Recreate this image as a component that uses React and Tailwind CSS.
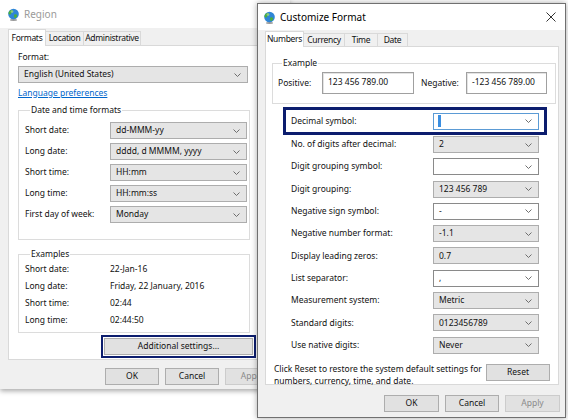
import React from 'react';

const Chevron = () => (
  <svg width="7" height="4" viewBox="0 0 7 4" className="shrink-0">
    <polyline points="0.5,0.5 3.5,3.5 6.5,0.5" fill="none" stroke="#606060" strokeWidth="0.9" />
  </svg>
);

const Globe = () => (
  <svg width="13" height="13" viewBox="0 0 13 13" className="shrink-0">
    <ellipse cx="6.5" cy="12" rx="3.5" ry="0.9" fill="#9a9a9a" />
    <circle cx="6.5" cy="6" r="5.3" fill="#2f86d6" />
    <path d="M3 2.6c1.3-.9 2.6-.6 3.2.4.5.9-.4 1.5-1.2 1.6-.9.2-.6 1.6-1.6 1.9-.9.2-1.7-.3-2-1.3.2-1 .7-1.9 1.6-2.6z" fill="#4caf3a" />
    <path d="M7.6 6.3c.9-.4 2 0 2.4.8.4.9-.3 2.1-1.2 2.7-.8.5-1.6.1-1.6-.8 0-.9-.6-1.9.4-2.7z" fill="#4caf3a" />
    <circle cx="5" cy="3.6" r="1.4" fill="#ffffff" opacity="0.35" />
  </svg>
);

function Combo({ value, white, className = '' }) {
  return (
    <div
      className={`flex h-[17px] shrink-0 items-center justify-between border pl-[5px] pr-[6px] ${
        white ? 'border-[#8a8a8a] bg-white' : 'border-[#adadad] bg-[#e5e5e5]'
      } ${className}`}
    >
      <span className="leading-none">{value}</span>
      <Chevron />
    </div>
  );
}

function Button({ children, className = '' }) {
  return (
    <div className={`flex shrink-0 items-center justify-center border border-[#adadad] bg-[#e1e1e1] ${className}`}>
      {children}
    </div>
  );
}

const dateRows = [
  ['Short date:', 'dd-MMM-yy'],
  ['Long date:', 'dddd, d MMMM, yyyy'],
  ['Short time:', 'HH:mm'],
  ['Long time:', 'HH:mm:ss'],
  ['First day of week:', 'Monday'],
];

const exampleRows = [
  ['Short date:', '22-Jan-16'],
  ['Long date:', 'Friday, 22 January, 2016'],
  ['Short time:', '02:44'],
  ['Long time:', '02:44:50'],
];

const numberRows = [
  ['No. of digits after decimal:', '2', false],
  ['Digit grouping symbol:', '', true],
  ['Digit grouping:', '123 456 789', false],
  ['Negative sign symbol:', '-', true],
  ['Negative number format:', '-1.1', false],
  ['Display leading zeros:', '0.7', false],
  ['List separator:', ',', true],
  ['Measurement system:', 'Metric', false],
  ['Standard digits:', '0123456789', false],
  ['Use native digits:', 'Never', false],
];

function RegionWindow() {
  return (
    <div className="absolute left-0 top-0 flex h-[389px] w-[290px] flex-col bg-[#f0f0f0] shadow-[0_2px_5px_rgba(0,0,0,0.35)]">
      <div className="flex h-[28px] shrink-0 items-center gap-[4px] bg-white pl-[7px]">
        <Globe />
        <span className="text-[10px] text-[#9a9a9a]">Region</span>
      </div>

      <div className="px-[8px]">
        <div className="flex h-[18px] items-end tracking-[-0.3px]">
          <div className="relative z-10 flex h-[17px] w-[38px] items-center justify-center border border-b-0 border-[#d9d9d9] bg-white">Formats</div>
          <div className="flex h-[15px] w-[38px] items-center justify-center border border-l-0 border-[#d9d9d9]">Location</div>
          <div className="flex h-[15px] w-[57px] items-center justify-center border border-l-0 border-[#d9d9d9]">Administrative</div>
        </div>

        <div className="-mt-px flex h-[315px] w-[252px] flex-col border border-[#d9d9d9] bg-white pl-[9px]">
          <div className="mt-[5px] h-[12px] shrink-0 leading-[12px]">Format:</div>
          <Combo value="English (United States)" className="mt-[3px] w-[230px]" />
          <div className="mt-[4px] h-[12px] shrink-0 leading-[12px] text-[#0066cc] underline">Language preferences</div>

          <fieldset className="mt-[5px] w-[232px] shrink-0 border border-[#dcdcdc] pb-[16px] pl-[6px] pr-px">
            <legend className="ml-[5px] px-px leading-[12px]">Date and time formats</legend>
            <div className="mt-[6px] flex flex-col gap-[4px]">
              {dateRows.map(([label, value]) => (
                <div key={label} className="flex items-center">
                  <span className="w-[85px] shrink-0">{label}</span>
                  <Combo value={value} className="w-[137px]" />
                </div>
              ))}
            </div>
          </fieldset>

          <fieldset className="mt-[8px] w-[232px] shrink-0 border border-[#dcdcdc] pb-[3px] pl-[6px]">
            <legend className="ml-[5px] px-px leading-[12px]">Examples</legend>
            <div className="mt-[1px] flex flex-col">
              {exampleRows.map(([label, value]) => (
                <div key={label} className="flex h-[17px] items-center">
                  <span className="w-[85px] shrink-0">{label}</span>
                  <span>{value}</span>
                </div>
              ))}
            </div>
          </fieldset>

          <div className="ml-[83px] mt-[2px] h-[23px] w-[155px] shrink-0 border-2 border-[#0c1d6e] p-px">
            <Button className="h-full w-full">Additional settings...</Button>
          </div>
        </div>

        <div className="mt-[8px] flex gap-[6px] pl-[97px]">
          <Button className="h-[17px] w-[54px]">OK</Button>
          <Button className="h-[17px] w-[54px]">Cancel</Button>
          <Button className="h-[17px] w-[54px] border-[#cccccc] bg-[#cccccc] text-[#8a8a8a]">Apply</Button>
        </div>
      </div>
    </div>
  );
}

function CustomizeWindow() {
  return (
    <div className="absolute left-[257px] top-[3px] flex h-[415px] w-[309px] flex-col border border-[#707070] bg-[#f0f0f0] shadow-[0_0_6px_rgba(0,0,0,0.35)]">
      <div className="flex h-[26px] shrink-0 items-center bg-white pl-[5px] pr-[9px]">
        <Globe />
        <span className="ml-[4px] text-[10px] text-black">Customize Format</span>
        <svg width="10" height="10" viewBox="0 0 10 10" className="ml-auto">
          <path d="M0.5 0.5L9.5 9.5M9.5 0.5L0.5 9.5" stroke="#333" strokeWidth="1" />
        </svg>
      </div>

      <div className="px-[7px]">
        <div className="flex h-[17px] items-end tracking-[-0.3px]">
          <div className="relative z-10 flex h-[16px] w-[39px] items-center justify-center border border-b-0 border-[#d9d9d9] bg-white">Numbers</div>
          <div className="flex h-[14px] w-[41px] items-center justify-center border border-l-0 border-[#d9d9d9]">Currency</div>
          <div className="flex h-[14px] w-[33px] items-center justify-center border border-l-0 border-[#d9d9d9]">Time</div>
          <div className="flex h-[14px] w-[30px] items-center justify-center border border-l-0 border-[#d9d9d9]">Date</div>
        </div>

        <div className="-mt-px flex h-[339px] w-[294px] flex-col border border-[#d9d9d9] bg-white">
          <fieldset className="ml-[6px] mt-[10px] h-[47px] w-[284px] shrink-0 border border-[#dcdcdc] pl-[5px]">
            <legend className="ml-[4px] px-px leading-[12px]">Example</legend>
            <div className="mt-[3px] flex items-center">
              <span className="w-[44px] shrink-0">Positive:</span>
              <div className="h-[22px] w-[92px] shrink-0 border border-[#a0a0a0] px-[5px] pt-[3px] shadow-[inset_1px_1px_0_#e3e3e3]">123 456 789.00</div>
              <span className="ml-[7px] w-[45px] shrink-0">Negative:</span>
              <div className="h-[22px] w-[81px] shrink-0 border border-[#a0a0a0] px-[5px] pt-[3px] shadow-[inset_1px_1px_0_#e3e3e3]">-123 456 789.00</div>
            </div>
          </fieldset>

          <div className="ml-[17px] mt-[3px] flex h-[28px] w-[264px] shrink-0 items-center border-[3px] border-[#0c1d6e] pl-[5px]">
            <span className="w-[142px] shrink-0">Decimal symbol:</span>
            <div className="flex h-[17px] w-[106px] shrink-0 items-center justify-between border border-[#5b9bd5] bg-white pl-[4px] pr-[6px]">
              <span className="h-[12px] w-[3px] bg-[#3b8ee0]" />
              <Chevron />
            </div>
          </div>

          <div className="mt-[1px] flex shrink-0 flex-col gap-[5.3px] pl-[25px]">
            {numberRows.map(([label, value, white]) => (
              <div key={label} className="flex items-center">
                <span className="w-[142px] shrink-0">{label}</span>
                <Combo value={value} white={white} className="w-[106px]" />
              </div>
            ))}
          </div>

          <div className="mt-[9px] flex shrink-0 items-start pl-[8px]">
            <div className="w-[210px] shrink-0 leading-[12px]">
              Click Reset to restore the system default settings for numbers, currency, time, and date.
            </div>
            <Button className="ml-[2px] mt-[1px] h-[17px] w-[64px]">Reset</Button>
          </div>
        </div>

        <div className="mt-[10px] flex gap-[6px] pl-[119px]">
          <Button className="h-[17px] w-[55px] border-[#0078d7]">OK</Button>
          <Button className="h-[17px] w-[54px]">Cancel</Button>
          <Button className="h-[17px] w-[55px] border-[#cccccc] bg-[#cccccc] text-[#8a8a8a]">Apply</Button>
        </div>
      </div>
    </div>
  );
}

export default function App() {
  return (
    <div className="relative h-[420px] w-[568px] overflow-hidden bg-white font-['Noto_Sans',sans-serif] text-[8.5px] text-[#111]">
      <RegionWindow />
      <CustomizeWindow />
    </div>
  );
}
